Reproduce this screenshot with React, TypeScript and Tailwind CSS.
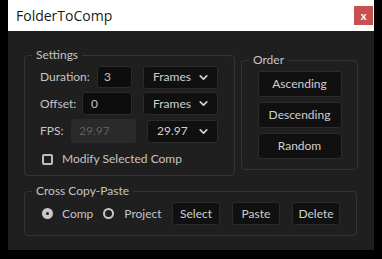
import { ChevronDown } from "lucide-react";

const font = { fontFamily: 'Lato, "Noto Sans", sans-serif' };

function Select({ value, width }: { value: string; width: string }) {
  return (
    <div
      className={`flex h-[23px] items-center justify-between rounded-[3px] border border-[#2b2b2b] bg-[#101010] pl-[9px] pr-[7px] text-[12px] text-[#cfcfcf] ${width}`}
    >
      <span>{value}</span>
      <ChevronDown className="h-[13px] w-[13px]" strokeWidth={3.2} />
    </div>
  );
}

function Btn({ label, className }: { label: string; className: string }) {
  return (
    <button
      type="button"
      className={`flex items-center justify-center rounded-[3px] border border-[#2b2b2b] bg-[#101010] text-[12px] text-[#cfcfcf] ${className}`}
    >
      {label}
    </button>
  );
}

export default function App() {
  return (
    <div className="h-[259px] w-[382px] bg-black" style={font}>
      <div className="ml-[8px] flex h-[250px] w-[366px] flex-col">
        <div className="flex h-[31px] items-center justify-between bg-white pl-[8px] pr-[1px]">
          <span
            className="text-[14px] text-[#1a1a1a]"
            style={{ fontFamily: '"Open Sans", "Noto Sans", sans-serif' }}
          >
            FolderToComp
          </span>
          <div className="flex h-[19px] w-[19px] items-center justify-center bg-[#c75050] text-[11px] font-bold leading-none text-white">
            x
          </div>
        </div>

        <div className="flex flex-1 flex-col bg-[#1f1f1f] px-[16px] pt-[16px]">
          <div className="flex items-start gap-[6px]">
            <fieldset className="h-[129px] w-[211px] rounded-[4px] border border-[#343434]">
              <legend className="ml-[7px] px-[4px] text-[12px] leading-[16px] text-[#c4c4c4]">
                Settings
              </legend>
              <div className="mt-[3px] flex flex-col pl-[15px] text-[12px] text-[#c4c4c4]">
                <div className="flex h-[22px] items-center">
                  <span className="w-[57px]">Duration:</span>
                  <div className="flex h-[22px] w-[35px] items-center rounded-[3px] border border-[#2b2b2b] bg-[#0d0d0d] pl-[6px]">
                    3
                  </div>
                  <div className="ml-[11px]">
                    <Select value="Frames" width="w-[75px]" />
                  </div>
                </div>
                <div className="mt-[4px] flex h-[23px] items-center">
                  <span className="w-[42px]">Offset:</span>
                  <div className="flex h-[23px] w-[50px] items-center rounded-[3px] border border-[#2b2b2b] bg-[#0d0d0d] pl-[8px]">
                    0
                  </div>
                  <div className="ml-[11px]">
                    <Select value="Frames" width="w-[75px]" />
                  </div>
                </div>
                <div className="mt-[4px] flex h-[24px] items-center">
                  <span className="w-[31px]">FPS:</span>
                  <div className="flex h-[24px] w-[65px] items-center rounded-[3px] bg-[#2a2a2a] pl-[8px] text-[#5e5e5e]">
                    29.97
                  </div>
                  <div className="ml-[11px]">
                    <Select value="29.97" width="w-[71px]" />
                  </div>
                </div>
                <div className="mt-[7px] flex items-center">
                  <span className="ml-[2px] h-[11px] w-[11px] rounded-[2px] border-2 border-[#bdbdbd]" />
                  <span className="ml-[9px]">Modify Selected Comp</span>
                </div>
              </div>
            </fieldset>

            <fieldset className="mt-[5px] h-[118px] w-[117px] rounded-[4px] border border-[#343434]">
              <legend className="ml-[7px] px-[4px] text-[12px] leading-[16px] text-[#c4c4c4]">
                Order
              </legend>
              <div className="mt-[3px] flex flex-col items-center gap-[5px]">
                <Btn label="Ascending" className="h-[26px] w-[84px]" />
                <Btn label="Descending" className="h-[26px] w-[84px]" />
                <Btn label="Random" className="h-[26px] w-[84px]" />
              </div>
            </fieldset>
          </div>

          <fieldset className="mt-[7px] h-[53px] w-[333px] rounded-[4px] border border-[#343434]">
            <legend className="ml-[7px] px-[4px] text-[12px] leading-[16px] text-[#c4c4c4]">
              Cross Copy-Paste
            </legend>
            <div className="mt-[3px] flex items-center pl-[17px] text-[12px] text-[#c4c4c4]">
              <span className="flex h-[11px] w-[11px] items-center justify-center rounded-full bg-[#c8c8c8]">
                <span className="h-[3px] w-[3px] rounded-full bg-[#1f1f1f]" />
              </span>
              <span className="ml-[9px]">Comp</span>
              <span className="ml-[10px] h-[11px] w-[11px] rounded-full border-2 border-[#c8c8c8]" />
              <span className="ml-[10px]">Project</span>
              <Btn label="Select" className="ml-auto h-[23px] w-[48px]" />
              <Btn label="Paste" className="ml-[12px] h-[23px] w-[48px]" />
              <Btn label="Delete" className="ml-[12px] mr-[16px] h-[23px] w-[48px]" />
            </div>
          </fieldset>
        </div>
      </div>
    </div>
  );
}
